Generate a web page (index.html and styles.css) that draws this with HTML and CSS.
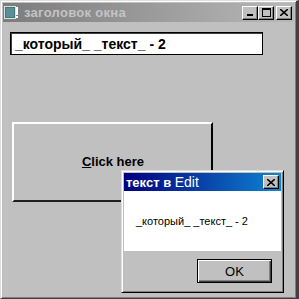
FILE: index.html
```html
<!DOCTYPE html>
<html lang="ru">
<head>
    <meta charset="UTF-8">
    <title>заголовок окна</title>
    <link rel="stylesheet" href="styles.css">
</head>
<body>

<div class="window">
    <!-- inactive title bar -->
    <div class="titlebar">
        <svg class="app-icon" width="16" height="16" viewBox="0 0 16 16">
            <rect x="0.5" y="1.5" width="11" height="12" fill="#3c7c74" stroke="#e0e0e0"/>
            <rect x="2" y="3" width="8" height="9" fill="#5a8f9a"/>
            <rect x="12" y="2" width="2" height="8" fill="#fff"/>
            <rect x="12" y="11" width="2" height="2" fill="#fff"/>
        </svg>
        <span class="title">заголовок окна</span>
        <div class="caption-buttons">
            <span class="cap-btn"><svg width="8" height="7" viewBox="0 0 8 7"><rect x="1" y="5" width="6" height="2" fill="#000"/></svg></span>
            <span class="cap-btn"><svg width="9" height="9" viewBox="0 0 9 9"><rect x="0.5" y="0.5" width="8" height="8" fill="none" stroke="#000"/><rect x="0" y="0" width="9" height="2" fill="#000"/></svg></span>
            <span class="cap-btn close"><svg width="8" height="7" viewBox="0 0 8 7"><path d="M0 0 L8 7 M8 0 L0 7" stroke="#000" stroke-width="1.6"/></svg></span>
        </div>
    </div>

    <div class="client">
        <div class="edit">_который_ _текст_ - 2</div>
        <div class="big-button"><span><u>C</u>lick here</span></div>
    </div>

    <!-- message box over the main window -->
    <div class="dialog">
        <div class="dlg-title">
            <span>текст в <span class="thin">Edit</span></span>
            <span class="cap-btn dlg-close"><svg width="8" height="7" viewBox="0 0 8 7"><path d="M0 0 L8 7 M8 0 L0 7" stroke="#000" stroke-width="1.6"/></svg></span>
        </div>
        <div class="dlg-body">_который_ _текст_ - 2</div>
        <div class="dlg-footer">
            <div class="ok-button">OK</div>
        </div>
    </div>
</div>

</body>
</html>
```

FILE: styles.css
```css
html, body {
    margin: 0;
    padding: 0;
    background-color: #c0c0c0;
}
.window {
    position: relative;
    box-sizing: border-box;
    width: 299px;
    height: 299px;
    padding: 2px;
    background-color: #c0c0c0;
    border-top: 1px solid #dfdfdf;
    border-left: 1px solid #dfdfdf;
    border-right: 3px solid #404040;
    border-bottom: 1px solid #404040;
    box-shadow: inset 1px 1px 0 #fff, inset -1px -1px 0 #808080;
    font-family: "Liberation Sans", Arial, sans-serif;
    overflow: hidden;
}
.titlebar {
    display: flex;
    align-items: center;
    height: 19px;
    padding: 0 2px 0 1px;
    background: linear-gradient(to right, #7c7c7c, #b8b8b8);
}
.app-icon {
    flex: none;
}
.title {
    margin-left: 4px;
    font-size: 13px;
    font-weight: bold;
    color: #c4c4c4;
    letter-spacing: 0.3px;
}
.caption-buttons {
    margin-left: auto;
    display: flex;
}
.cap-btn {
    box-sizing: border-box;
    width: 16px;
    height: 14px;
    display: flex;
    align-items: center;
    justify-content: center;
    background-color: #c0c0c0;
    border-top: 1px solid #fff;
    border-left: 1px solid #fff;
    border-right: 1px solid #000;
    border-bottom: 1px solid #000;
    box-shadow: inset -1px -1px 0 #808080;
}
.cap-btn.close {
    margin-left: 2px;
}
.client {
    padding: 10px 0 0 7px;
}
.edit {
    box-sizing: border-box;
    width: 253px;
    height: 23px;
    padding: 3px 4px;
    background-color: #fff;
    border: 1px solid #000;
    box-shadow: inset 1px 1px 0 #404040;
    font-size: 14px;
    font-weight: bold;
    line-height: 16px;
    color: #000;
}
.big-button {
    box-sizing: border-box;
    width: 201px;
    height: 80px;
    margin: 67px 0 0 2px;
    display: flex;
    align-items: center;
    justify-content: center;
    border-top: 2px solid #fff;
    border-left: 2px solid #fff;
    border-right: 2px solid #000;
    border-bottom: 2px solid #202020;
    font-size: 13px;
    font-weight: bold;
    color: #000;
}
.big-button span {
    padding: 0 0 1px 1px;
}
.dialog {
    position: absolute;
    left: 120px;
    top: 169px;
    box-sizing: border-box;
    width: 163px;
    height: 123px;
    padding: 2px;
    background-color: #c0c0c0;
    border-top: 1px solid #dfdfdf;
    border-left: 1px solid #dfdfdf;
    border-right: 1px solid #000;
    border-bottom: 1px solid #000;
    box-shadow: inset 1px 1px 0 #fff, inset -1px -1px 0 #808080;
}
.dlg-title {
    display: flex;
    align-items: center;
    height: 18px;
    padding: 0 2px 0 2px;
    background: linear-gradient(to right, #000080, #1084d0);
    color: #fff;
    font-size: 13px;
    font-weight: bold;
}
.dlg-title .thin {
    font-weight: normal;
    font-size: 14px;
}
.dlg-close {
    margin-left: auto;
}
.dlg-body {
    height: 60px;
    padding: 0 0 0 12px;
    display: flex;
    align-items: center;
    background-color: #fff;
    font-size: 11px;
    color: #000;
}
.dlg-footer {
    display: flex;
    justify-content: flex-end;
    padding: 8px 9px 0 0;
}
.ok-button {
    box-sizing: border-box;
    width: 75px;
    height: 24px;
    display: flex;
    align-items: center;
    justify-content: center;
    border: 1px solid #000;
    box-shadow: inset 1px 1px 0 #fff, inset -1px -1px 0 #404040, inset -2px -2px 0 #808080;
    font-size: 13px;
    color: #000;
}
```
